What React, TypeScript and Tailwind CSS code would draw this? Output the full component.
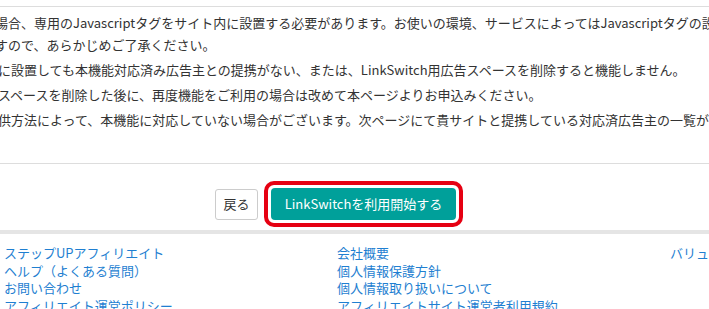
const notes = [
  [
    "場合、専用のJavascriptタグをサイト内に設置する必要があります。お使いの環境、サービスによってはJavascriptタグの設置ができない場合がございま",
    "すので、あらかじめご了承ください。",
  ],
  ["に設置しても本機能対応済み広告主との提携がない、または、LinkSwitch用広告スペースを削除すると機能しません。"],
  ["スペースを削除した後に、再度機能をご利用の場合は改めて本ページよりお申込みください。"],
  ["供方法によって、本機能に対応していない場合がございます。次ページにて貴サイトと提携している対応済広告主の一覧が表示されます。"],
];

const footerCols = [
  ["ステップUPアフィリエイト", "ヘルプ（よくある質問）", "お問い合わせ", "アフィリエイト運営ポリシー"],
  ["会社概要", "個人情報保護方針", "個人情報取り扱いについて", "アフィリエイトサイト運営者利用規約"],
  ["バリューコマース"],
];

const App = () => {
  return (
    <div className="h-[309px] w-[709px] overflow-hidden bg-white font-['Noto_Sans_CJK_JP','Noto_Sans',sans-serif] text-[13px] text-[#333]">
      {/* Notes */}
      <div className="mt-[6px] border-t border-[#dddddd] pt-[5px] pb-[29px]">
        {notes.map((lines, i) => (
          <div key={i} className={i === 0 ? "mb-[3px] -ml-[5px]" : "mb-[3px] -ml-[2px]"}>
            {lines.map((line) => (
              <p key={line} className="whitespace-nowrap leading-[22px]">
                {line}
              </p>
            ))}
          </div>
        ))}
      </div>

      {/* Actions */}
      <div className="border-t border-[#dddddd] pt-[17px] pl-[215px]">
        <div className="flex items-center gap-[6px]">
          <a
            href="#"
            className="flex h-[31px] w-[43px] items-center justify-center rounded-[3px] border border-[#cccccc] bg-white text-[#333]"
          >
            戻る
          </a>
          <div className="rounded-[10px] border-[4px] border-[#e60012] p-[3px]">
            <a
              href="#"
              className="flex h-[32px] w-[185px] items-center justify-center rounded-[4px] bg-[#00a09a] text-white"
            >
              LinkSwitchを利用開始する
            </a>
          </div>
        </div>
      </div>

      {/* Footer */}
      <div className="mt-[3px] h-[4px] bg-[#e5e5e5]" />
      <div className="grid grid-cols-[333px_333px_1fr] pl-[4px] pt-[10px]">
        {footerCols.map((col, i) => (
          <ul key={i} className="flex flex-col">
            {col.map((item) => (
              <li key={item} className="whitespace-nowrap leading-[17.5px]">
                <a href="#" className="text-[#1f7fd1] hover:underline">
                  {item}
                </a>
              </li>
            ))}
          </ul>
        ))}
      </div>
    </div>
  );
};

export default App;
